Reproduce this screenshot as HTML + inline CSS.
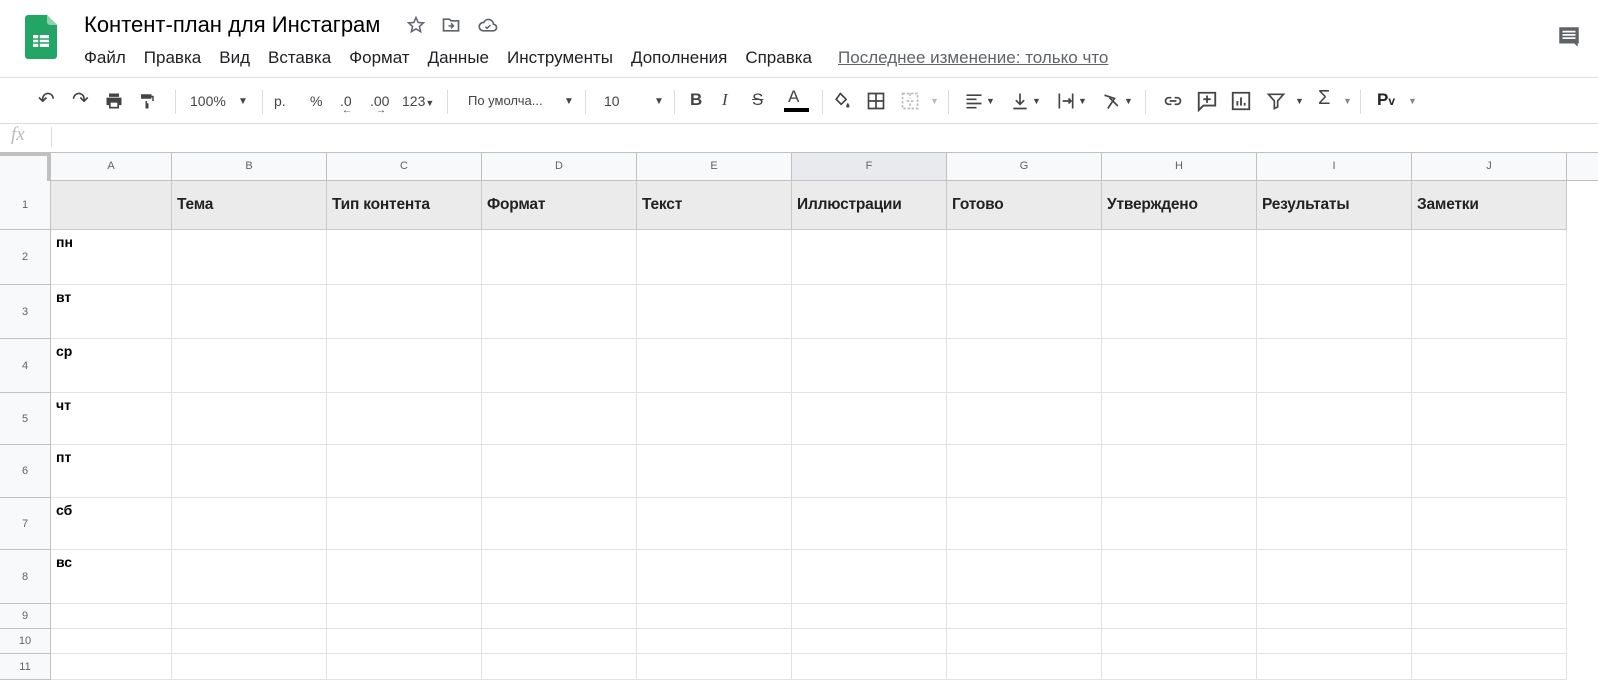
<!DOCTYPE html>
<html><head><meta charset="utf-8">
<style>
*{margin:0;padding:0;box-sizing:border-box}
body{width:1598px;height:664px;overflow:hidden;background:#fff;font-family:"Liberation Sans",Arial,sans-serif;position:relative;color:#202124}
.a{position:absolute}
.title{left:84px;top:12px;font-size:22px;color:#000;white-space:nowrap}
.menu{left:84px;top:48px;font-size:17px;color:#202124;white-space:nowrap;word-spacing:0}
.menu span{margin-right:18px}
.menu u{color:#5f6368;margin-left:8px}
.tb{left:0;top:77px;width:1598px;height:47px;border-top:1px solid #dadce0;border-bottom:1px solid #dadce0}
.ti{position:absolute;top:15px;font-size:14px;color:#444;white-space:nowrap}
.sep{position:absolute;top:12px;width:1px;height:24px;background:#dadce0}
.ch{position:absolute;top:152px;height:29px;background:#f8f9fa;border-right:1px solid #c0c0c0;border-bottom:1px solid #c0c0c0;border-top:1px solid #c0c0c0;font-size:11px;color:#5f6368;text-align:center;line-height:27px}
.rh{position:absolute;left:0;width:51px;background:#f8f9fa;border-right:1px solid #c0c0c0;border-bottom:1px solid #c0c0c0;font-size:11px;color:#5f6368;display:flex;align-items:center;justify-content:center}
.cell{position:absolute;border-right:1px solid #e2e2e2;border-bottom:1px solid #e2e2e2}
.h1{background:#ebebeb;border-color:#c8c8c8;font-weight:bold;font-size:15.5px;color:#222;padding-left:5px;line-height:48px;white-space:nowrap;letter-spacing:-0.2px}
.d{font-weight:bold;font-size:14px;color:#000;padding:4px 0 0 5px}
</style></head><body>
<svg class="a" style="left:25px;top:15px" width="32" height="44" viewBox="0 0 32 44"><path d="M3 0h19l10 10v31a3 3 0 0 1-3 3H3a3 3 0 0 1-3-3V3a3 3 0 0 1 3-3z" fill="#23a566"/><path d="M22 0l10 10h-7a3 3 0 0 1-3-3z" fill="#8ed1b1"/><rect x="8" y="20" width="16" height="12" fill="#fff"/><path d="M8 24h16M8 28h16M14 20v12" stroke="#23a566" stroke-width="1.6"/></svg>
<div class="a title">Контент-план для Инстаграм</div>
<svg class="a" style="left:406px;top:15px" width="20" height="20" viewBox="0 0 24 24"><path d="M12 3l2.6 6 6.4.5-4.9 4.2 1.5 6.3L12 16.6 6.4 20l1.5-6.3L3 9.5 9.4 9z" fill="none" stroke="#5f6368" stroke-width="1.8"/></svg>
<svg class="a" style="left:441px;top:15px" width="20" height="20" viewBox="0 0 24 24"><path d="M3 5h7l2 2h9v12H3z" fill="none" stroke="#5f6368" stroke-width="2"/><path d="M9 13h6m-3-3l3 3-3 3" fill="none" stroke="#5f6368" stroke-width="1.8"/></svg>
<svg class="a" style="left:477px;top:15px" width="22" height="20" viewBox="0 0 24 24"><path d="M6 19h12a4 4 0 0 0 .5-8A6 6 0 0 0 7 9a5 5 0 0 0-1 10z" fill="none" stroke="#5f6368" stroke-width="2"/><path d="M9 14l2 2 4-4" fill="none" stroke="#5f6368" stroke-width="1.8"/></svg>
<div class="a menu"><span>Файл</span><span>Правка</span><span>Вид</span><span>Вставка</span><span>Формат</span><span>Данные</span><span>Инструменты</span><span>Дополнения</span><span>Справка</span><u>Последнее изменение: только что</u></div>
<svg class="a" style="left:1556px;top:24px" width="26" height="26" viewBox="0 0 24 24"><path d="M3 3h18v15h-1v3l-3-3H3z" fill="#5f6368"/><path d="M6 7h12M6 10h12M6 13h12" stroke="#fff" stroke-width="1.6"/></svg>
<div class="a tb">
<div class="ti" style="left:38px;font-size:20px;top:9px;color:#444">↶</div>
<div class="ti" style="left:72px;font-size:20px;top:9px;color:#444">↷</div>
<svg style="position:absolute;left:104px;top:13px" width="20" height="20" viewBox="0 0 24 24"><path d="M6 3h12v4H6zM3 8h18v9h-3v4H6v-4H3z" fill="#444"/><rect x="8" y="14" width="8" height="5" fill="#fff"/></svg>
<svg style="position:absolute;left:138px;top:13px" width="18" height="20" viewBox="0 0 24 24"><path d="M4 3h14v6H4zM18 5h3v7h-9v3h2v7h-4v-10h9V7h-1z" fill="#444"/></svg>
<div class="sep" style="left:175px"></div>
<div class="ti" style="left:190px">100%</div><div class="ti" style="left:238px;font-size:10px;top:18px">▼</div>
<div class="sep" style="left:262px"></div>
<div class="ti" style="left:274px">р.</div>
<div class="ti" style="left:310px">%</div>
<div class="ti" style="left:340px">.0<span style="position:absolute;left:2px;top:12px;font-size:10px">←</span></div>
<div class="ti" style="left:370px">.00<span style="position:absolute;left:6px;top:12px;font-size:10px">→</span></div>
<div class="ti" style="left:402px">123<span style="font-size:9px">▼</span></div>
<div class="sep" style="left:447px"></div>
<div class="ti" style="left:468px;font-size:13px">По умолча...</div><div class="ti" style="left:564px;font-size:10px;top:18px">▼</div>
<div class="sep" style="left:585px"></div>
<div class="ti" style="left:604px">10</div><div class="ti" style="left:654px;font-size:10px;top:18px">▼</div>
<div class="sep" style="left:674px"></div>
<div class="ti" style="left:690px;font-weight:bold;font-size:17px;top:12px">B</div>
<div class="ti" style="left:722px;font-style:italic;font-size:17px;top:12px;font-family:'Liberation Serif',serif">I</div>
<div class="ti" style="left:752px;font-size:17px;top:12px;text-decoration:line-through">S</div>
<div class="ti" style="left:788px;font-size:17px;top:9px">A</div><div style="position:absolute;left:784px;top:30px;width:25px;height:4px;background:#000"></div>
<div class="sep" style="left:822px"></div>
<svg style="position:absolute;left:832px;top:13px" width="20" height="20" viewBox="0 0 24 24"><path d="M10 3l7 7-6 6-6-6z" fill="none" stroke="#444" stroke-width="2"/><path d="M19 14c1 2 2 3 2 4a2 2 0 0 1-4 0c0-1 1-2 2-4z" fill="#444"/></svg>
<svg style="position:absolute;left:866px;top:13px" width="20" height="20" viewBox="0 0 24 24"><path d="M3 3h18v18H3zM12 3v18M3 12h18" fill="none" stroke="#444" stroke-width="2"/></svg>
<svg style="position:absolute;left:900px;top:13px" width="20" height="20" viewBox="0 0 24 24"><path d="M3 3h18v18H3zM8 12h8M12 3v6M12 15v6" fill="none" stroke="#bbb" stroke-width="2" stroke-dasharray="3 2"/></svg>
<div class="ti" style="left:930px;font-size:9px;top:18px;color:#bbb">▼</div>
<div class="sep" style="left:948px"></div>
<svg style="position:absolute;left:964px;top:13px" width="20" height="20" viewBox="0 0 24 24"><path d="M3 5h18M3 10h12M3 15h18M3 20h12" stroke="#444" stroke-width="2"/></svg><div class="ti" style="left:986px;font-size:9px;top:18px">▼</div>
<svg style="position:absolute;left:1010px;top:13px" width="20" height="20" viewBox="0 0 24 24"><path d="M12 3v12M7 11l5 5 5-5M4 21h16" fill="none" stroke="#444" stroke-width="2"/></svg><div class="ti" style="left:1032px;font-size:9px;top:18px">▼</div>
<svg style="position:absolute;left:1056px;top:13px" width="20" height="20" viewBox="0 0 24 24"><path d="M4 3v18M20 3v18M8 12h10M15 9l3 3-3 3" fill="none" stroke="#444" stroke-width="2"/></svg><div class="ti" style="left:1078px;font-size:9px;top:18px">▼</div>
<svg style="position:absolute;left:1102px;top:13px" width="20" height="20" viewBox="0 0 24 24"><path d="M3 5l12 4-8 12M9 8l10 10" fill="none" stroke="#444" stroke-width="2"/></svg><div class="ti" style="left:1124px;font-size:9px;top:18px">▼</div>
<div class="sep" style="left:1145px"></div>
<svg style="position:absolute;left:1162px;top:13px" width="22" height="20" viewBox="0 0 24 24"><path d="M10 8H7a4 4 0 0 0 0 8h3M14 8h3a4 4 0 0 1 0 8h-3M8 12h8" fill="none" stroke="#444" stroke-width="2"/></svg>
<svg style="position:absolute;left:1196px;top:11px" width="22" height="24" viewBox="0 0 24 24"><path d="M3 3h18v14H8l-5 5z" fill="none" stroke="#444" stroke-width="2"/><path d="M12 6v8M8 10h8" stroke="#444" stroke-width="2"/></svg>
<svg style="position:absolute;left:1230px;top:12px" width="22" height="22" viewBox="0 0 24 24"><path d="M3 3h18v18H3z" fill="none" stroke="#444" stroke-width="2"/><path d="M8 17v-5M12 17V8M16 17v-3" stroke="#444" stroke-width="2"/></svg>
<svg style="position:absolute;left:1266px;top:13px" width="20" height="20" viewBox="0 0 24 24"><path d="M3 4h18l-7 8v7l-4 2v-9z" fill="none" stroke="#444" stroke-width="2"/></svg><div class="ti" style="left:1295px;font-size:9px;top:18px">▼</div>
<div class="ti" style="left:1318px;font-size:20px;top:9px">Σ</div><div class="ti" style="left:1343px;font-size:9px;top:18px;color:#888">▼</div>
<div class="sep" style="left:1360px"></div>
<div class="ti" style="left:1377px;font-size:17px;top:12px;font-weight:bold;color:#222">P<span style="font-size:12px">v</span></div><div class="ti" style="left:1408px;font-size:9px;top:18px;color:#888">▼</div>
</div>
<div class="a" style="left:11px;top:124px;font-family:'Liberation Serif',serif;font-style:italic;font-size:19px;color:#bbb">fx</div>
<div class="a" style="left:51px;top:127px;width:1px;height:20px;background:#dadce0"></div>
<div class="a" style="left:0;top:152px;width:1598px;height:29px;background:#f8f9fa;border-top:1px solid #c0c0c0;border-bottom:1px solid #c0c0c0"></div>
<div class="a" style="left:0;top:152px;width:51px;height:29px;border-right:4px solid #c0c0c0;border-top:4px solid #c0c0c0;background:#f8f9fa"></div>
<div class="ch" style="left:51px;width:121px">A</div>
<div class="ch" style="left:172px;width:155px">B</div>
<div class="ch" style="left:327px;width:155px">C</div>
<div class="ch" style="left:482px;width:155px">D</div>
<div class="ch" style="left:637px;width:155px">E</div>
<div class="ch" style="left:792px;width:155px;background:#e8eaed">F</div>
<div class="ch" style="left:947px;width:155px">G</div>
<div class="ch" style="left:1102px;width:155px">H</div>
<div class="ch" style="left:1257px;width:155px">I</div>
<div class="ch" style="left:1412px;width:155px">J</div>
<div id="g"></div>
<script>
var cols=[51,172,327,482,637,792,947,1102,1257,1412,1567];
var rows=[181,230,285,339,393,445,498,550,604,629,654,680];
var h1=["","Тема","Тип контента","Формат","Текст","Иллюстрации","Готово","Утверждено","Результаты","Заметки"];
var days=["пн","вт","ср","чт","пт","сб","вс"];
var s="";
for(var r=0;r<11;r++){
s+='<div class="rh" style="top:'+rows[r]+'px;height:'+(rows[r+1]-rows[r])+'px">'+(r+1)+'</div>';
for(var c=0;c<10;c++){
var cls="cell",t="";
if(r==0){cls+=" h1";t=h1[c];}
else if(c==0&&r<=7){cls+=" d";t=days[r-1];}
s+='<div class="a '+cls+'" style="left:'+cols[c]+'px;top:'+rows[r]+'px;width:'+(cols[c+1]-cols[c])+'px;height:'+(rows[r+1]-rows[r])+'px">'+t+'</div>';}}
document.getElementById("g").outerHTML=s;
</script>
</body></html>
